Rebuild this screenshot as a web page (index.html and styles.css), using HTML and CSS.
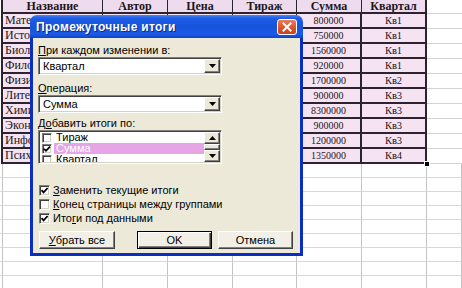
FILE: index.html
```html
<!DOCTYPE html>
<html lang="ru">
<head>
<meta charset="utf-8">
<title>Промежуточные итоги</title>
<link rel="stylesheet" href="styles.css">
</head>
<body>
<div class="screen">
  <div class="sheet">
    <div class="x"></div><div class="h">Название</div><div class="h">Автор</div><div class="h">Цена</div><div class="h">Тираж</div><div class="h">Сумма</div><div class="h t">Квартал</div><div class="o"></div>

    <div class="x"></div><div class="d n">Математика</div><div class="d"></div><div class="d"></div><div class="d"></div><div class="d t">800000</div><div class="d t q">Кв1</div><div class="o"></div>
    <div class="x"></div><div class="d n">История</div><div class="d"></div><div class="d"></div><div class="d"></div><div class="d t">750000</div><div class="d t q">Кв1</div><div class="o"></div>
    <div class="x"></div><div class="d n">Биология</div><div class="d"></div><div class="d"></div><div class="d"></div><div class="d t">1560000</div><div class="d t q">Кв1</div><div class="o"></div>
    <div class="x"></div><div class="d n">Философия</div><div class="d"></div><div class="d"></div><div class="d"></div><div class="d t">920000</div><div class="d t q">Кв1</div><div class="o"></div>
    <div class="x"></div><div class="d n">Физика</div><div class="d"></div><div class="d"></div><div class="d"></div><div class="d t">1700000</div><div class="d t q">Кв2</div><div class="o"></div>
    <div class="x"></div><div class="d n">Литература</div><div class="d"></div><div class="d"></div><div class="d"></div><div class="d t">900000</div><div class="d t q">Кв3</div><div class="o"></div>
    <div class="x"></div><div class="d n">Химия</div><div class="d"></div><div class="d"></div><div class="d"></div><div class="d t">8300000</div><div class="d t q">Кв3</div><div class="o"></div>
    <div class="x"></div><div class="d n">Экономика</div><div class="d"></div><div class="d"></div><div class="d"></div><div class="d t">900000</div><div class="d t q">Кв3</div><div class="o"></div>
    <div class="x"></div><div class="d n">Информатика</div><div class="d"></div><div class="d"></div><div class="d"></div><div class="d t">1200000</div><div class="d t q">Кв3</div><div class="o"></div>
    <div class="x"></div><div class="d n">Психология</div><div class="d"></div><div class="d"></div><div class="d"></div><div class="d t">1350000</div><div class="d t q">Кв4</div><div class="o"></div>

    <div class="e"></div><div class="e"></div><div class="e"></div><div class="e"></div><div class="e"></div><div class="e"></div><div class="e"></div><div class="e"></div>
    <div class="e"></div><div class="e"></div><div class="e"></div><div class="e"></div><div class="e"></div><div class="e"></div><div class="e"></div><div class="e"></div>
    <div class="e"></div><div class="e"></div><div class="e"></div><div class="e"></div><div class="e"></div><div class="e"></div><div class="e"></div><div class="e"></div>
    <div class="e"></div><div class="e"></div><div class="e"></div><div class="e"></div><div class="e"></div><div class="e"></div><div class="e"></div><div class="e"></div>
    <div class="e"></div><div class="e"></div><div class="e"></div><div class="e"></div><div class="e"></div><div class="e"></div><div class="e"></div><div class="e"></div>
    <div class="e"></div><div class="e"></div><div class="e"></div><div class="e"></div><div class="e"></div><div class="e"></div><div class="e"></div><div class="e"></div>
    <div class="e"></div><div class="e"></div><div class="e"></div><div class="e"></div><div class="e"></div><div class="e"></div><div class="e"></div><div class="e"></div>
    <div class="e"></div><div class="e"></div><div class="e"></div><div class="e"></div><div class="e"></div><div class="e"></div><div class="e"></div><div class="e"></div>
    <div class="e"></div><div class="e"></div><div class="e"></div><div class="e"></div><div class="e"></div><div class="e"></div><div class="e"></div><div class="e"></div>
  </div>

  <div class="handle"></div>

  <div class="dialog">
    <div class="titlebar">
      <span class="title">Промежуточные итоги</span>
      <span class="close"><svg width="10" height="10" viewBox="0 0 10 10"><path d="M1.5 1.5 L8.5 8.5 M8.5 1.5 L1.5 8.5" stroke="#fff" stroke-width="2" stroke-linecap="square"/></svg></span>
    </div>
    <div class="body">
      <div class="label l1"><u>П</u>ри каждом изменении в:</div>
      <div class="combo"><span class="val">Квартал</span><span class="drop"><svg width="7" height="4" viewBox="0 0 7 4"><path d="M0 0 H7 L3.5 4 Z" fill="#000"/></svg></span></div>
      <div class="label l2"><u>О</u>перация:</div>
      <div class="combo"><span class="val">Сумма</span><span class="drop"><svg width="7" height="4" viewBox="0 0 7 4"><path d="M0 0 H7 L3.5 4 Z" fill="#000"/></svg></span></div>
      <div class="label l3">Д<u>о</u>бавить итоги по:</div>
      <div class="list">
        <div class="items">
          <div class="item"><span class="cb small"></span><span class="txt">Тираж</span></div>
          <div class="item sel"><span class="cb small"><svg width="8" height="8" viewBox="0 0 8 8"><path d="M1 3.8 L3 5.8 L7 1.6" fill="none" stroke="#000" stroke-width="1.7"/></svg></span><span class="txt">Сумма</span></div>
          <div class="item"><span class="cb small"></span><span class="txt">Квартал</span></div>
        </div>
        <div class="scroll">
          <span class="sbtn"><svg width="7" height="4" viewBox="0 0 7 4"><path d="M0 4 H7 L3.5 0 Z" fill="#000"/></svg></span>
          <span class="thumb"></span>
          <span class="sbtn"><svg width="7" height="4" viewBox="0 0 7 4"><path d="M0 0 H7 L3.5 4 Z" fill="#000"/></svg></span>
        </div>
      </div>
      <div class="checks">
        <div class="chk"><span class="cb"><svg width="9" height="9" viewBox="0 0 9 9"><path d="M1.5 4.2 L3.6 6.4 L7.6 2" fill="none" stroke="#000" stroke-width="1.8"/></svg></span><span><u>З</u>аменить текущие итоги</span></div>
        <div class="chk"><span class="cb"></span><span><u>К</u>онец страницы между группами</span></div>
        <div class="chk"><span class="cb"><svg width="9" height="9" viewBox="0 0 9 9"><path d="M1.5 4.2 L3.6 6.4 L7.6 2" fill="none" stroke="#000" stroke-width="1.8"/></svg></span><span>Ито<u>г</u>и под данными</span></div>
      </div>
      <div class="buttons">
        <span class="btn wide"><u>У</u>брать все</span>
        <span class="btn def">OK</span>
        <span class="btn cancel">Отмена</span>
      </div>
    </div>
  </div>
</div>
</body>
</html>
```

FILE: styles.css
```css
* { box-sizing: border-box; }
html, body { margin: 0; padding: 0; }
body { width: 462px; height: 288px; overflow: hidden; background: #fff; }

.screen { position: relative; width: 462px; height: 288px; overflow: hidden; }

/* spreadsheet */
.sheet {
  display: grid;
  grid-template-columns: 3px 100px 65px 65px 64px 65px 65px 35px;
  grid-template-rows: 14px repeat(10, 15px) repeat(9, 14px);
  font-family: "Liberation Serif", "Times New Roman", serif;
  color: #1c1620;
}
.sheet > div {
  overflow: hidden;
  white-space: nowrap;
  display: flex;
  align-items: center;
}
.x { background: #fff; border-right: 2px solid #2c2230; }
.h {
  background: #eedcee;
  border-right: 1px solid #2c2230;
  border-bottom: 2px solid #2c2230;
  justify-content: center;
  font-weight: bold;
  font-size: 12px;
  line-height: 12px;
}
.h.t { border-right-width: 2px; }
.d {
  background: #f6e3f2;
  border-right: 1px solid #2c2230;
  border-bottom: 2px solid #2c2230;
  justify-content: center;
  font-size: 10px;
}
.d.n { justify-content: flex-start; padding-left: 2px; font-size: 12px; }
.d.t { border-right-width: 2px; }
.d.q { font-size: 10.5px; }
.o { background: #fff; border-bottom: 1px solid #d4d4d4; }
.e { background: #fff; border-right: 1px solid #c4c4c4; border-bottom: 1px solid #d8d8d8; }

.handle {
  position: absolute;
  left: 424px;
  top: 161px;
  width: 6px;
  height: 6px;
  background: #000;
  border: 1px solid #fff;
}

/* dialog */
.dialog {
  position: absolute;
  left: 30px;
  top: 15px;
  width: 273px;
  height: 241px;
  display: flex;
  flex-direction: column;
  font-family: "Liberation Sans", Arial, sans-serif;
  font-size: 11px;
  color: #000;
}
.titlebar {
  flex: none;
  height: 23px;
  border-radius: 7px 7px 0 0;
  background: linear-gradient(#4a86f2 0%, #1e5de6 14%, #1753dd 50%, #1b5ae4 84%, #0e44c4 100%);
  display: flex;
  align-items: center;
  justify-content: space-between;
  padding: 0 6px 0 6px;
}
.title {
  color: #fff;
  font-weight: bold;
  font-size: 12px;
  letter-spacing: 0.3px;
  text-shadow: 1px 1px 0 #0b2a8c;
}
.close {
  width: 20px;
  height: 16px;
  border: 1px solid #fff;
  border-radius: 3px;
  background: linear-gradient(#ee7a55, #d9512a 60%, #c8441f);
  display: flex;
  align-items: center;
  justify-content: center;
}

.body {
  flex: 1;
  background: #ece9d8;
  border: 3px solid #0a2ec2;
  border-top: none;
  padding: 6px 0 0 5px;
  display: flex;
  flex-direction: column;
  align-items: flex-start;
}
.label { line-height: 12px; height: 12px; white-space: nowrap; }
.l2 { margin-top: 7px; }
.l3 { margin-top: 4px; }

.combo {
  margin-top: 1px;
  width: 184px;
  height: 18px;
  background: #fff;
  border: 1px solid;
  border-color: #808080 #fff #fff #808080;
  box-shadow: inset 1px 1px 0 #404040, inset -1px -1px 0 #d4d0c8;
  padding: 1px;
  display: flex;
  align-items: center;
  justify-content: space-between;
}
.val { padding-left: 3px; }
.drop {
  width: 16px;
  height: 14px;
  background: #ece9d8;
  border: 1px solid;
  border-color: #fff #404040 #404040 #fff;
  box-shadow: inset -1px -1px 0 #808080;
  display: flex;
  align-items: center;
  justify-content: center;
}

.list {
  margin-top: 1px;
  width: 184px;
  height: 34px;
  background: #fff;
  border: 1px solid;
  border-color: #808080 #fff #fff #808080;
  box-shadow: inset 1px 1px 0 #404040, inset -1px -1px 0 #d4d0c8;
  padding: 1px;
  display: flex;
}
.items { flex: 1; overflow: hidden; }
.item { height: 11px; display: flex; align-items: center; padding-left: 2px; }
.txt { flex: 1; margin-left: 2px; padding-left: 2px; height: 11px; line-height: 11px; }
.sel .txt { background: #e6a6e6; color: #fff; }

.scroll { width: 16px; display: flex; flex-direction: column; }
.sbtn, .thumb {
  background: #ece9d8;
  border: 1px solid;
  border-color: #fff #404040 #404040 #fff;
  box-shadow: inset -1px -1px 0 #808080;
  display: flex;
  align-items: center;
  justify-content: center;
}
.sbtn { height: 12px; }
.thumb { flex: 1; }

.cb {
  flex: none;
  width: 11px;
  height: 11px;
  background: #fff;
  border: 1px solid;
  border-color: #808080 #fff #fff #808080;
  box-shadow: inset 1px 1px 0 #404040, inset -1px -1px 0 #d4d0c8;
  display: flex;
  align-items: center;
  justify-content: center;
}
.cb.small { width: 10px; height: 10px; }

.checks { margin-top: 19px; padding-left: 1px; display: flex; flex-direction: column; }
.chk { height: 14px; display: flex; align-items: center; gap: 3px; white-space: nowrap; }

.buttons { margin-top: 6px; margin-left: 1px; display: flex; }
.btn {
  width: 75px;
  height: 18px;
  background: #f1efe6;
  border: 1px solid;
  border-color: #fff #404040 #404040 #fff;
  box-shadow: inset -1px -1px 0 #808080;
  display: flex;
  align-items: center;
  justify-content: center;
}
.btn.wide { width: 76px; }
.btn.def {
  margin-left: 22px;
  border-color: #000;
  box-shadow: inset 1px 1px 0 #fff, inset -1px -1px 0 #404040, inset -2px -2px 0 #808080;
}
.btn.cancel { margin-left: 6px; }
```
